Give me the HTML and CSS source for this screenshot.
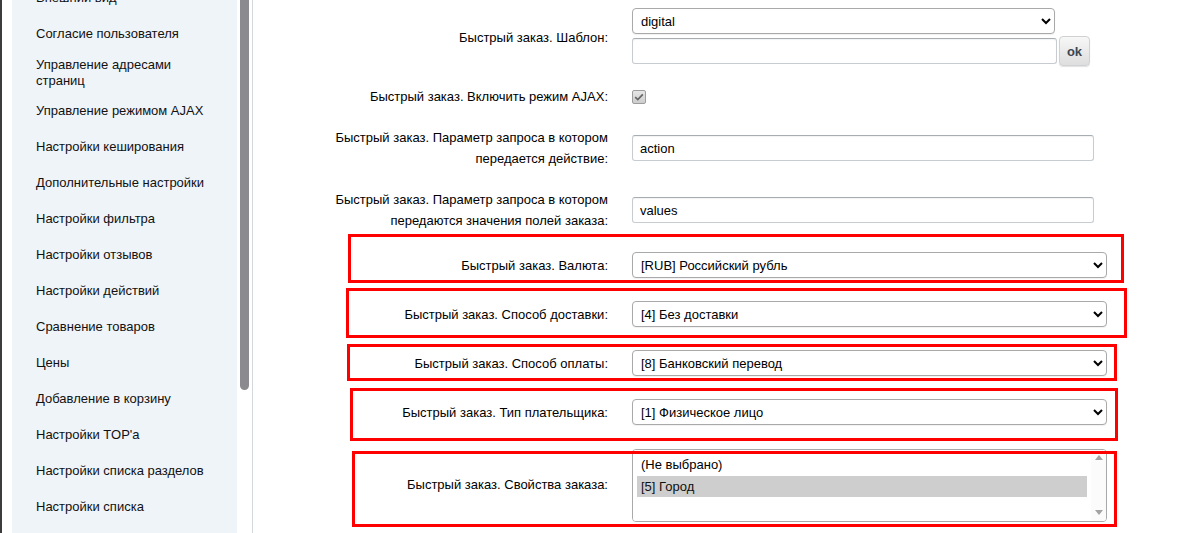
FILE: index.html
```html
<!DOCTYPE html>
<html lang="ru">
<head>
<meta charset="utf-8">
<title>Быстрый заказ</title>
<link rel="stylesheet" href="styles.css">
</head>
<body>
<div class="page">
  <aside class="side">
    <nav class="menu">
      <ul class="menu-list">
        <li class="menu-item">Внешний вид</li>
        <li class="menu-item">Согласие пользователя</li>
        <li class="menu-item menu-item--wrap">Управление адресами страниц</li>
        <li class="menu-item">Управление режимом AJAX</li>
        <li class="menu-item">Настройки кеширования</li>
        <li class="menu-item">Дополнительные настройки</li>
        <li class="menu-item">Настройки фильтра</li>
        <li class="menu-item">Настройки отзывов</li>
        <li class="menu-item">Настройки действий</li>
        <li class="menu-item">Сравнение товаров</li>
        <li class="menu-item">Цены</li>
        <li class="menu-item">Добавление в корзину</li>
        <li class="menu-item">Настройки TOP'a</li>
        <li class="menu-item">Настройки списка разделов</li>
        <li class="menu-item">Настройки списка</li>
        <li class="menu-item">Настройки детального просмотра</li>
      </ul>
    </nav>
    <div class="scroll"><div class="thumb"></div></div>
  </aside>

  <main class="content">
    <form class="form">
      <div class="row">
        <div class="label">Быстрый заказ. Шаблон:</div>
        <div class="field">
          <select class="select select--tpl"><option>digital</option></select>
          <div class="tpl-line">
            <input class="input input--tpl" type="text" value="">
            <button class="btn-ok" type="button">ok</button>
          </div>
        </div>
      </div>

      <div class="row">
        <div class="label">Быстрый заказ. Включить режим AJAX:</div>
        <div class="field">
          <span class="check"><svg width="10" height="8" viewBox="0 0 10 8"><path d="M1.2 4.1 L3.8 6.6 L8.8 1.3" fill="none" stroke="#666" stroke-width="1.7"/></svg></span>
        </div>
      </div>

      <div class="row">
        <div class="label">Быстрый заказ. Параметр запроса в котором<br>передается действие:</div>
        <div class="field"><input class="input input--wide" type="text" value="action"></div>
      </div>

      <div class="row">
        <div class="label">Быстрый заказ. Параметр запроса в котором<br>передаются значения полей заказа:</div>
        <div class="field"><input class="input input--wide" type="text" value="values"></div>
      </div>

      <div class="row">
        <div class="label">Быстрый заказ. Валюта:</div>
        <div class="field"><select class="select select--wide"><option>[RUB] Российский рубль</option></select></div>
      </div>

      <div class="row">
        <div class="label">Быстрый заказ. Способ доставки:</div>
        <div class="field"><select class="select select--wide"><option>[4] Без доставки</option></select></div>
      </div>

      <div class="row">
        <div class="label">Быстрый заказ. Способ оплаты:</div>
        <div class="field"><select class="select select--wide"><option>[8] Банковский перевод</option></select></div>
      </div>

      <div class="row">
        <div class="label">Быстрый заказ. Тип плательщика:</div>
        <div class="field"><select class="select select--wide"><option>[1] Физическое лицо</option></select></div>
      </div>

      <div class="row">
        <div class="label">Быстрый заказ. Свойства заказа:</div>
        <div class="field">
          <div class="listbox-box">
            <select class="listbox" multiple size="4">
              <option>(Не выбрано)</option>
              <option selected>[5] Город</option>
            </select>
            <div class="lb-scroll">
              <span class="lb-arrow lb-arrow--up"></span>
              <span class="lb-arrow lb-arrow--down"></span>
            </div>
          </div>
        </div>
      </div>
    </form>

    <div class="mark mark-1"></div>
    <div class="mark mark-2"></div>
    <div class="mark mark-3"></div>
    <div class="mark mark-4"></div>
    <div class="mark mark-5"></div>
  </main>
</div>
</body>
</html>
```

FILE: styles.css
```css
html, body {
  margin: 0;
  height: 533px;
  overflow: hidden;
  background: #fff;
}

body {
  font-family: "Liberation Sans", Arial, sans-serif;
  font-size: 13px;
  color: #000;
}

.page {
  display: flex;
  height: 533px;
  overflow: hidden;
}

/* ---------- sidebar ---------- */
.side {
  display: flex;
  flex: none;
  width: 253px;
  box-sizing: border-box;
  border-left: 2px solid #3c3c3c;
  border-right: 1px solid #d3d8dc;
  padding-left: 10px;
  background: #fff;
}

.menu {
  width: 225px;
  flex: none;
  background: #eff4f9;
  overflow: hidden;
}

.menu-list {
  list-style: none;
  margin: -20px 0 0;
  padding: 0;
}

.menu-item {
  padding: 10px 20px 10px 24px;
  line-height: 16px;
  color: #111;
}

.menu-item--wrap {
  padding-top: 5px;
  padding-bottom: 4px;
}

.scroll {
  width: 15px;
  flex: none;
  box-sizing: border-box;
  padding: 0 3px;
  background: #fff;
}

.thumb {
  height: 390px;
  background: #8b8b8f;
  border-radius: 0 0 5px 5px;
}

/* ---------- content ---------- */
.content {
  flex: 1;
  position: relative;
}

.form {
  margin-top: -2px;
}

.row {
  display: grid;
  grid-template-columns: 367px 1fr;
  align-items: center;
  padding: 10px 0;
}

.label {
  text-align: right;
  padding-right: 12px;
  line-height: 21px;
  color: #000;
}

.field {
  padding-left: 12px;
  display: flex;
  flex-direction: column;
  align-items: flex-start;
}

.select {
  height: 26px;
  box-sizing: border-box;
  font-family: "Liberation Sans", Arial, sans-serif;
  font-size: 13px;
  color: #000;
  background: #fff;
  border: 1px solid #a9a9a9;
  border-radius: 4px;
  padding: 0 4px;
  box-shadow: 0 1px 1px rgba(0, 0, 0, 0.06);
}

.select--tpl {
  width: 423px;
}

.select--wide {
  width: 475px;
  margin: 1px 0 2px;
}

.tpl-line {
  display: flex;
  align-items: center;
  gap: 2px;
  margin-top: 2px;
}

.input {
  height: 26px;
  box-sizing: border-box;
  font-family: "Liberation Sans", Arial, sans-serif;
  font-size: 13px;
  color: #000;
  background: #fff;
  border: 1px solid #c7ccd0;
  border-top-color: #a8adb1;
  border-radius: 3px;
  padding: 0 7px;
  box-shadow: inset 0 1px 1px rgba(0, 0, 0, 0.05);
}

.input--tpl {
  width: 425px;
}

.input--wide {
  width: 462px;
}

.btn-ok {
  width: 31px;
  height: 30px;
  box-sizing: border-box;
  padding: 0;
  font-family: "Liberation Sans", Arial, sans-serif;
  font-size: 13px;
  font-weight: bold;
  color: #3e4650;
  background: linear-gradient(#f7f7f7, #dedede);
  border: 1px solid #cfd1d3;
  border-radius: 4px;
  box-shadow: 0 1px 1px rgba(0, 0, 0, 0.12);
}

.check {
  width: 14px;
  height: 14px;
  box-sizing: border-box;
  display: flex;
  align-items: center;
  justify-content: center;
  border: 1px solid #9d9d9d;
  border-radius: 2px;
  background: linear-gradient(#e6e6e6, #cdcdcd);
}

/* listbox with its own scrollbar column */
.listbox-box {
  display: flex;
  width: 475px;
  height: 73px;
  margin-top: 2px;
  box-sizing: border-box;
  border: 1px solid #a9a9a9;
  border-radius: 4px;
  background: #fff;
  overflow: hidden;
}

.listbox {
  flex: 1;
  min-width: 0;
  height: 71px;
  box-sizing: border-box;
  font-family: "Liberation Sans", Arial, sans-serif;
  font-size: 13px;
  color: #000;
  background: #fff;
  border: none;
  outline: none;
  padding: 4px;
  overflow: hidden;
}

.listbox option {
  padding: 3px 4px;
  line-height: 15px;
}

.lb-scroll {
  width: 15px;
  flex: none;
  display: flex;
  flex-direction: column;
  justify-content: space-between;
  align-items: center;
  padding: 5px 0 6px;
  box-sizing: border-box;
  background: #fbfbfb;
}

.lb-arrow {
  width: 0;
  height: 0;
  border-left: 4px solid transparent;
  border-right: 4px solid transparent;
}

.lb-arrow--up {
  border-bottom: 5px solid #a3a3a3;
}

.lb-arrow--down {
  border-top: 5px solid #a3a3a3;
}

/* ---------- annotation frames ---------- */
.mark {
  position: absolute;
  box-sizing: border-box;
  border: 3px solid #ff0000;
  pointer-events: none;
}

.mark-1 { left: 95px; top: 234px; width: 776px; height: 49px; }
.mark-2 { left: 93px; top: 288px; width: 781px; height: 50px; }
.mark-3 { left: 94px; top: 344px; width: 770px; height: 37px; }
.mark-4 { left: 97px; top: 388px; width: 768px; height: 53px; }
.mark-5 { left: 99px; top: 451px; width: 765px; height: 76px; }
```
